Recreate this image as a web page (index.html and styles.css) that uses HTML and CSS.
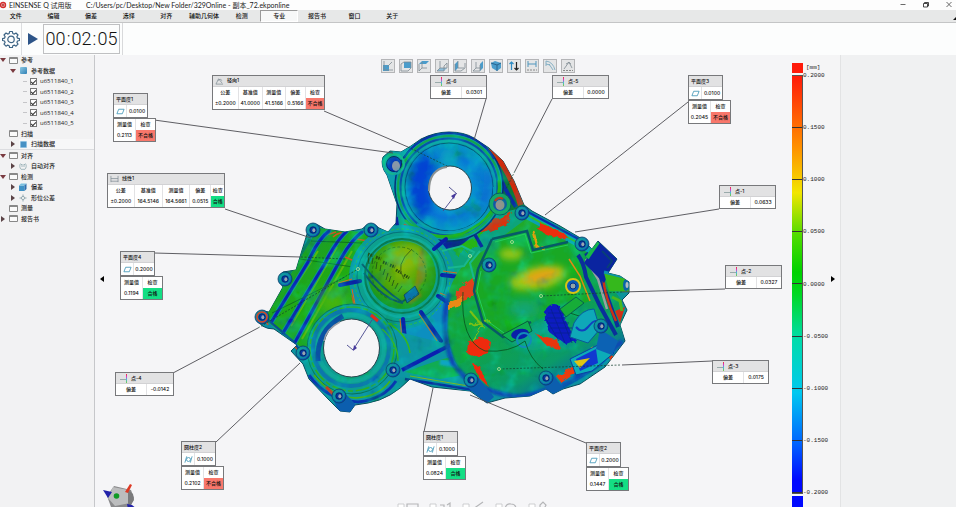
FILE: index.html
```html
<!DOCTYPE html>
<html lang="zh-CN">
<head>
<meta charset="utf-8">
<title>EINSENSE Q 试用版</title>
<link rel="stylesheet" href="styles.css">
</head>
<body>
<div class="app">
<header class="titlebar">
  <svg class="logo" viewBox="0 0 8 8" width="8" height="8" aria-hidden="true"><circle cx="3" cy="4" r="3.2" fill="#d22b2b"/><path d="M1.6 2.6h2.8v2.8H1.6z" fill="#fff"/><circle cx="3" cy="4" r="1" fill="#a01818"/></svg>
  <span class="product">EINSENSE Q 试用版</span>
  <span class="path">C:/Users/pc/Desktop/New Folder/329Online - 副本_72.ekponline</span>
  <div class="window-buttons">
    <button aria-label="最小化"><svg viewBox="0 0 8 8" width="8" height="8"><path d="M1.500 3.500h5" stroke="#444" stroke-width=".8"/></svg></button>
    <button aria-label="还原"><svg viewBox="0 0 8 8" width="8" height="8"><path d="M1.500 2.500h4v3.500h-4zM2.500 2.500v-1h4v3.500h-1" fill="none" stroke="#333" stroke-width=".9"/></svg></button>
    <button aria-label="关闭"><svg viewBox="0 0 8 8" width="8" height="8"><path d="M1.500 1l5 5M6.500 1l-5 5" stroke="#444" stroke-width=".8"/></svg></button>
  </div>
</header>
<nav class="menubar">
  <div class="tabs">
    <button>文件</button><button>编辑</button><button>偏差</button><button>选择</button><button>对齐</button><button>辅助几何体</button><button>检测</button><button class="active">专业</button><button>报告书</button><button>窗口</button><button>关于</button>
  </div>
  <button class="collapse" aria-label="收起"><svg viewBox="0 0 3 3" width="3" height="3"><path d="M0 3L3 0V3z" fill="#111"/></svg></button>
</nav>
<div class="ribbon">
  <button class="tool gear" aria-label="设置"><svg viewBox="0 0 18 18" width="18" height="18" fill="none" stroke="#3c6384" stroke-width="1.200" stroke-linejoin="round"><path d="M7.600 1.500h2.800l.4 2 1.500.6 1.700-1.100 2 2-1.100 1.700.6 1.500 2 .4v1.900l-2 .5-.6 1.500 1.100 1.700-2 2-1.700-1.100-1.500.6-.4 2H7.600l-.4-2-1.500-.6L4 16.200l-2-2 1.100-1.700-.6-1.500-2-.5V8.600l2-.4.6-1.500L2 5l2-2 1.700 1.100 1.500-.6z"/><circle cx="9" cy="9.400" r="3.200"/></svg></button>
  <button class="tool play" aria-label="运行"><svg viewBox="0 0 10 12" width="10" height="12"><path d="M0 0l10 6-10 6z" fill="#2d5488"/></svg></button>
  <time class="clock"><span>00</span><i>:</i><span>02</span><i>:</i><span>05</span></time>
  <div class="ribbon-rest"></div>
</div>
<main class="workspace">
<aside class="sidebar">
<ul class="tree">
  <li class="l1"><b class="tw open"></b><i class="folder"></i>参考</li>
  <li class="l2"><b class="tw open"></b><i class="cube"></i>参考数据</li>
  <li class="l3"><label><input type="checkbox" checked>u6511840_1</label></li>
  <li class="l3"><label><input type="checkbox" checked>u6511840_2</label></li>
  <li class="l3"><label><input type="checkbox" checked>u6511840_3</label></li>
  <li class="l3"><label><input type="checkbox" checked>u6511840_4</label></li>
  <li class="l3"><label><input type="checkbox" checked>u6511840_5</label></li>
  <li class="l1"><b class="tw none"></b><i class="folder"></i>扫描</li>
  <li class="l2 selected"><b class="tw"></b><i class="cube flat"></i>扫描数据</li>
  <li class="l1"><b class="tw open"></b><i class="folder"></i>对齐</li>
  <li class="l2"><b class="tw"></b><svg class="ti" viewBox="0 0 8 8"><path d="M1.500 1.500C.5 3 .5 6 2 7.300h4C7.500 6 7.500 3 6.500 1.500M3 5V2l-1 1M5 5V2l1 1" fill="none" stroke="#8fa9b0" stroke-width=".8"/></svg>自动对齐</li>
  <li class="l1"><b class="tw open"></b><i class="folder"></i>检测</li>
  <li class="l2"><b class="tw"></b><svg class="ti" viewBox="0 0 8 8"><path d="M0 2.500h5.500V8H0z" fill="#3f92c6"/><path d="M0 2.500L2 .5h5.500l-2 2z" fill="#7bc0e0"/><path d="M5.500 2.500l2-2V6l-2 2z" fill="#2f6fae"/></svg>偏差</li>
  <li class="l2"><b class="tw"></b><svg class="ti" viewBox="0 0 8 8"><path d="M4 .5v7M.5 4h7" stroke="#7d97a0" stroke-width=".8"/><circle cx="4" cy="4" r="1.600" fill="#f4f4f4" stroke="#7d97a0" stroke-width=".7"/></svg>形位公差</li>
  <li class="l1"><b class="tw none"></b><i class="folder"></i>测量</li>
  <li class="l1"><b class="tw"></b><i class="folder"></i>报告书</li>
</ul>
</aside>

<section class="stage">
<svg class="scene" width="697" height="453" viewBox="95 54 697 453" aria-hidden="true">
  <defs>
    <filter id="b1" x="-50%" y="-50%" width="200%" height="200%"><feGaussianBlur stdDeviation="1"/></filter>
    <filter id="b3" x="-60%" y="-60%" width="220%" height="220%"><feGaussianBlur stdDeviation="3.500"/></filter>
    <filter id="b6" x="-80%" y="-80%" width="260%" height="260%"><feGaussianBlur stdDeviation="7"/></filter>
    <filter id="rough" x="-30%" y="-30%" width="160%" height="160%"><feTurbulence type="fractalNoise" baseFrequency=".18" numOctaves="2" seed="4" result="n"/><feDisplacementMap in="SourceGraphic" in2="n" scale="6"/><feGaussianBlur stdDeviation=".5"/></filter>
    <filter id="mottle" x="0" y="0" width="100%" height="100%"><feTurbulence type="fractalNoise" baseFrequency=".06" numOctaves="3" seed="11"/><feColorMatrix values="0 0 0 0 0  0 1.600 0 0 -.25  0 0 1.800 0 -.5  3 0 0 0 -1.200"/></filter>
    <linearGradient id="block" x1="0" y1="0" x2="1" y2="1"><stop offset="0" stop-color="#15923c"/><stop offset=".5" stop-color="#22ab10"/><stop offset="1" stop-color="#0b9a5c"/></linearGradient>
    <radialGradient id="disc" cx=".5" cy=".5" r=".5"><stop offset=".4" stop-color="#0a9fd0"/><stop offset=".7" stop-color="#0877d6"/><stop offset="1" stop-color="#0796c4"/></radialGradient>
    <radialGradient id="dome" cx=".5" cy=".4" r=".55"><stop offset="0" stop-color="#86b80a"/><stop offset=".6" stop-color="#4ca408"/><stop offset="1" stop-color="#1a9a20"/></radialGradient>
    <linearGradient id="cover" x1="0" y1="0" x2=".6" y2="1"><stop offset="0" stop-color="#2cab1c"/><stop offset=".5" stop-color="#12a63c"/><stop offset=".85" stop-color="#0b9a68"/><stop offset="1" stop-color="#0763b0"/></linearGradient>
    <linearGradient id="boss" x1="0" y1="0" x2="1" y2="1"><stop offset="0" stop-color="#10a59a"/><stop offset=".6" stop-color="#0b6fb5"/><stop offset="1" stop-color="#0a2fae"/></linearGradient>
    <path id="body" d="M307 233Q309 223 318 224L325 228 345 231 362 228Q371 219 379 227L388 231 396 222 397 203 387 174Q380 165 383 156L390 150 401 151 411 145 421 138 Q435 131 449 131 464 131 474 137L489 147 503 160 514 180 524 204 532 210 560 225 582 238 592 248 598 240 617 258 608 272 620 275 629 281 629 292 622 299 627 309 620 324 625 340 605 366 580 383 563 388 553 393 546 388 530 395 505 397 487 402 470 390 432 386 410 378Q391 398 368 402L355 404 350 411 340 410 328 398 309 378 303 363 291 350 297 344 274 328Q260 328 256 316 257 308 269 311L283 286Q276 277 283 271L296 269Z"/>
    <clipPath id="cb"><use href="#body"/></clipPath>
    <g id="lug"><circle r="7" fill="url(#boss)" stroke="#073c66" stroke-width=".8"/><circle r="5" fill="none" stroke="#12a890" stroke-width=".8"/><circle r="3.200" fill="#0637a0" stroke="#022055" stroke-width=".7"/><ellipse cx=".8" cy=".3" rx="1.500" ry="2" fill="#98a5b0"/></g>
  </defs>

  <use href="#body" fill="#0d93a0" stroke="#0a4a5c" stroke-width="1"/>
  <g clip-path="url(#cb)">
    <!-- ribbed block -->
    <path d="M318 227L395 234 378 262 362 300 330 312 306 350 264 318Z" fill="url(#block)"/>
    <g fill="none">
      <g stroke="#5cb80a" stroke-width="2"><path d="M318 250L278 312M337 246L291 325M352 250L302 338"/></g>
      <g stroke="#d9521a" stroke-width="1.500"><path d="M326 234l10-3M333 236q8-7 12-2M263 312l5 12M345 256l14 6 6 10M356 238l12 2M352 294l2 10M291 342l8 8"/></g>
      <g stroke="#0b9690" stroke-width="5" stroke-linecap="round"><path d="M329 230Q318 238 308 261L272 320M347 230Q336 240 325 262L283 332M362 231Q350 240 338 263L294 343"/></g>
      <g stroke="#0b22b5" stroke-width="3" stroke-linecap="round"><path d="M329 230Q318 238 308 261L272 320M347 230Q336 240 325 262L283 332M362 231Q350 240 338 263L294 343"/></g>
      <path d="M266 317L294 341 300 350" stroke="#0a4c90" stroke-width="2"/>
      <path d="M310 238L264 314" stroke="#0b7f60" stroke-width="3"/>
      <path d="M272 312L345 276M311 240L362 242M300 258L353 266M365 240L381 256" stroke="#0a5a22" stroke-width=".7"/>
      <path d="M375 232l6 14" stroke="#0a1f9a" stroke-width="4"/>
    </g>
    <circle cx="333" cy="300" r="14" fill="#4ab50c" filter="url(#b6)"/>

    <!-- webs between rings -->
    <path d="M398 215L450 240 520 205 535 215 480 260 440 300 410 260Z" fill="#0da47a"/>
    <g filter="url(#rough)"><path d="M403 222l14 8 10 6 12 14-14-3-16-12zM425 242l14 2 6 14-10-4zM470 228l16-6 16-6 10-5-5 12-20 8zM440 248l8 8-4 6z" fill="#dc3108"/><path d="M452 246l20-8 12-10-6 16-22 10z" fill="#28b414"/></g>
    <path d="M437 250q18-16 34-18-8 14-34 18zM396 216l3 20M474 232l8 14" fill="#0a249c" stroke="#0a249c" stroke-width="3.500"/>

    <!-- right flank of the upper ring -->
    <path d="M478 140L500 158 526 206 508 210 498 180Z" fill="#0c7838"/>
    <path d="M488 147Q505 156 513 176L524 203 518 205Q511 178 488 147Z" fill="#ce2a0c"/>
    <path d="M495 160Q500 182 516 206" fill="none" stroke="#0a2da5" stroke-width="4"/>

    <!-- upper ring -->
    <path d="M380 160L396 148 414 142 404 215 397 205Z" fill="#0d9fae"/>
    <circle cx="449" cy="186" r="54" fill="#0a9ca0" stroke="#062c78" stroke-width="1.500"/>
    <circle cx="449" cy="186" r="51" fill="none" stroke="#14a54c" stroke-width="2"/>
    <circle cx="449" cy="186" r="48.500" fill="none" stroke="#0a4fa8" stroke-width="2"/>
    <circle cx="449" cy="186" r="46" fill="none" stroke="#0fa6a6" stroke-width="2"/>
    <circle cx="449" cy="186" r="44" fill="url(#disc)" stroke="#064a72" stroke-width="1"/>
    <path d="M408 186Q409 160 425 150L438 168Q426 180 434 204L420 220Q408 205 408 186Z" fill="#0633d2" opacity=".75" filter="url(#b3)"/>
    <path d="M470 215Q492 200 488 170" fill="none" stroke="#0b5ed8" stroke-width="9" opacity=".6" filter="url(#b3)"/>
    <circle cx="449" cy="157" r="9" fill="#0fb4b8" opacity=".7" filter="url(#b3)"/>
    <path d="M404 157Q418 134 449 132 480 133 494 158" fill="none" stroke="#0833a8" stroke-width="2"/>
    <path d="M499 179Q503 214 462 233 430 242 405 219" fill="none" stroke="#23b21e" stroke-width="3"/>
    <path d="M494 186Q496 207 478 221 450 240 417 223" fill="none" stroke="#0796b8" stroke-width="2"/>
    <circle cx="500" cy="203" r="11" fill="#16a868" stroke="#0a5c60" stroke-width="1"/><circle cx="500" cy="203" r="7" fill="#1258a8"/><ellipse cx="500" cy="204" rx="4.500" ry="5" fill="#99908d"/><path d="M495 200q3-5 8-2" stroke="#c93515" stroke-width="2" fill="none"/>
    <circle cx="394" cy="163" r="10" fill="none" stroke="#16b58e" stroke-width="2"/><circle cx="394" cy="163" r="7.500" fill="#0836b8" stroke="#052060" stroke-width="1"/><ellipse cx="396" cy="165" rx="4" ry="5" fill="#8d97a8"/>

    <!-- dome -->
    <circle cx="402" cy="277" r="53" fill="#0b97a4"/>
    <path d="M440 300Q430 330 396 328L380 350 440 372 475 340 455 290Z" fill="#0c8fc0"/>
    <circle cx="402" cy="276" r="45" fill="#0da08e" stroke="#086070" stroke-width=".8"/>
    <circle cx="402" cy="276" r="48" fill="none" stroke="#2dbd3a" stroke-width="1" stroke-dasharray="3 2"/>
    <circle cx="403" cy="276" r="40" fill="none" stroke="#0eaca0" stroke-width="2.500"/>
    <circle cx="402" cy="275" r="37" fill="none" stroke="#087a50" stroke-width="2"/>
    <circle cx="402" cy="274" r="34" fill="url(#dome)"/>
    <ellipse cx="408" cy="255" rx="19" ry="12" fill="#9cc00a" opacity=".6" filter="url(#b3)"/>
    <path d="M420 247q12 18 3 34l-5 8 4 6-12 9-5-10q8-4 11-14" fill="#e06012" opacity=".35" filter="url(#b1)"/>
    <path d="M362 263Q382 288 402 301L417 290M364 272Q382 298 403 302" fill="none" stroke="#0a5b68" stroke-width="2"/>
    <path d="M368 255l1 8m4-6l-1 6m5-2l-1 7m5-4l-1 6m5-2l-2 6m5-2l-2 7m5-4l-2 6m5-2l-2 6m6-3l-3 6m7-3l-4 6" stroke="#1e4a16" stroke-width=".8"/>
    <path d="M368 253l5 2M376 256l5 2M383 261l5 2M390 264l5 2M396 269l5 3M404 274l5 3" stroke="#244c12" stroke-width="3" stroke-dasharray="1.500 1"/>
    <path d="M412 248Q394 264 404 278" fill="none" stroke="#355514" stroke-width=".8"/>
    <path d="M404 294l11-9 4 8-12 9z" fill="#0b73a8" stroke="#0a3c60" stroke-width=".8"/>
    <circle cx="399" cy="273" r="27" fill="none" stroke="#1a6016" stroke-width=".6" stroke-dasharray="3 2"/>
    <g stroke="#0a1fa8" stroke-width="4" stroke-linecap="round"><path d="M340 284l20-4M403 318l3 31M421 311l20 29M438 295l14 9M442 274l18 2M434 248l12-10"/></g>
    <g fill="none" stroke="#e0661a" stroke-width="1"><path d="M338 282l14-4M400 318l3 32M419 313l18 27M440 292l10 4M443 270l14 2M352 288l4 20M376 318l12 6"/></g>

    <!-- lower left ring -->
    <path d="M306 348Q310 372 330 393 352 406 380 395L400 376 470 391 475 350 395 330Z" fill="#0d95a4"/>
    <circle cx="352" cy="348" r="45" fill="#0d9c90" stroke="#077058" stroke-width="1"/>
    <circle cx="352" cy="348" r="42" fill="none" stroke="#2fae1c" stroke-width="1.500" stroke-dasharray="14 3 5 2"/>
    <circle cx="351" cy="347" r="38" fill="none" stroke="#0c77ac" stroke-width="4"/>
    <circle cx="351" cy="347" r="33" fill="none" stroke="#10a69a" stroke-width="4"/>
    <path d="M318 360Q316 330 343 315" stroke="#0a50a4" stroke-width="5" fill="none"/>
    <path d="M309 374Q326 399 358 401 384 398 396 380" fill="none" stroke="#0836b0" stroke-width="3"/>
    <path d="M314 374Q330 395 356 397 380 395 390 380" fill="none" stroke="#49b414" stroke-width="1.500"/>
    <path d="M326 386l8 8M371 314l7 6" stroke="#e0301a" stroke-width="3"/>
    <path d="M382 328Q398 342 398 360M388 322Q408 334 410 352" fill="none" stroke="#36b81c" stroke-width="1.500"/>
    <path d="M402 369L458 340" stroke="#0a1fb0" stroke-width="4"/>
    <path d="M405 371Q440 358 465 352L475 372 440 378Z" fill="#11ac52"/><path d="M440 361l25 4" stroke="#0ba6c4" stroke-width="6" filter="url(#b1)"/>
    <path d="M405 378L480 390" stroke="#0830a0" stroke-width="2.500"/><path d="M410 375L480 387" stroke="#86b812" stroke-width="1"/>

    <!-- right cover -->
    <path d="M449 290Q458 262 483 250L530 215 582 240 600 270 622 300 624 340 600 366 560 390 520 397 480 390Q452 372 447 330Z" fill="url(#cover)"/>
    <path d="M449 292Q439 330 453 362 470 390 520 396 580 386 622 340" fill="none" stroke="#0848b4" stroke-width="5" filter="url(#b1)"/>
    <path d="M522 212L592 250" stroke="#0aa0b0" stroke-width="7"/><path d="M526 210L586 242" stroke="#0a2cb0" stroke-width="2"/><path d="M527 214L580 243" stroke="#35c01c" stroke-width="1.500"/>
    <path d="M492 240L527 230 533 248 565 240 578 262 590 300 560 310 540 318 504 338 483 322 474 290 478 268Z" fill="#19a824"/>
    <path d="M505 340L545 318 570 300 560 345 530 350Z" fill="#0ba288" filter="url(#b3)"/>
    <ellipse cx="538" cy="277" rx="29" ry="11" transform="rotate(-12 538 277)" fill="#a9c60a" filter="url(#b3)"/>
    <ellipse cx="541" cy="275" rx="18" ry="6" transform="rotate(-14 541 275)" fill="#e4a212" filter="url(#b3)"/>
    <ellipse cx="511" cy="253" rx="12" ry="6" fill="#96c612" filter="url(#b3)"/>
    <ellipse cx="525" cy="308" rx="17" ry="9" fill="#0ca4b0" opacity=".7" filter="url(#b6)"/>
    <rect x="255" y="130" width="375" height="285" filter="url(#mottle)" opacity=".28"/>
    <g filter="url(#rough)">
      <path d="M456 290L474 276 476 294 455 304Z" fill="#e0431a"/><path d="M448 302l16-7-4 10-12 4z" fill="#e88a12"/>
      <path d="M468 342l14-6 8 4-2 12-12 4-9-4z" fill="#ee2a0a"/><path d="M474 364l6 1 4 12 5 9-10-9z" fill="#ee2a0a"/>
      <path d="M540 222l24 10 5 6-20-3-12-7z" fill="#ec2d08"/><path d="M533 230l4 16 8 2" stroke="#e0a010" fill="none" stroke-width="3"/>
      <path d="M536 333l22 6 2 10-14-5z" fill="#e8340c"/><path d="M557 376l18-12 4 6-18 12z" fill="#ec3a0c"/><path d="M572 360l26-16-2 14-18 6z" fill="#e0c010"/><path d="M490 320l-20 4M470 310l12 14-10 16" stroke="#7cc014" stroke-width="2" fill="none"/>
      <path d="M600 344l10 6 2 16" fill="none" stroke="#e53a10" stroke-width="3"/>
    </g>
    <path d="M492 238L527 230 533 249 568 241M478 268L474 290 483 321 503 336 531 321M492 238L478 268" fill="none" stroke="#075a68" stroke-width="2.500"/>
    <path d="M495 241L525 233 531 252 568 244M481 270L477 290 486 319 504 332" fill="none" stroke="#23cd5e" stroke-width="1"/>
    <path d="M502 334L528 320 532 330 512 341Z" fill="#0fae50" stroke="#0a5a40" stroke-width="1"/><ellipse cx="520" cy="333" rx="9" ry="5" fill="#0a1fa8" transform="rotate(-12 520 333)"/><circle cx="524" cy="339" r="7" fill="none" stroke="#128bb8" stroke-width="2"/>
    <path d="M463 291Q460 340 485 350 510 352 525 340 530 358 543 368M564 310l18 6 10 16-30 6" fill="none" stroke="#08521e" stroke-width=".8"/>
    <g filter="url(#rough)"><path d="M546 308q6-8 14-3l8 20 9 15-10 4-17-12q-8-14-4-24z" fill="#0a1cc0"/></g>
    <path d="M548 312h16m-17 5h19m-18 5h21m-19 5h24m-19 5h21M551 308l14 34M557 304l15 38M546 318l13 22" stroke="#06218a" stroke-width=".7"/>
    <path d="M560 308L576 296 584 302 566 316Z" fill="#17ad38" stroke="#086050"/>
    <path d="M574 322Q582 308 594 308L600 328 588 342 570 336Z" fill="#0fa8b8" stroke="#0a5a9a"/><path d="M576 326q6 7 12 0t8-6" fill="none" stroke="#1140c0" stroke-width="2"/>
    <path d="M578 254Q584 262 586 276L600 305 616 334M586 252L606 292 618 326" fill="none" stroke="#0a2f9a" stroke-width="4"/>
    <path d="M569 258L580 275 590 300" fill="none" stroke="#e08a12" stroke-width="1.500"/>
    <path d="M586 258L598 278 607 308" fill="none" stroke="#99a1a4" stroke-width="2.500"/>
    <path d="M603 274Q604 295 616 320" fill="none" stroke="#c83216" stroke-width="2.500"/>
    <path d="M598 240L617 258 604 282 584 262Z" fill="#0a24a0"/><path d="M587 257L598 241" stroke="#16b64a" stroke-width="4"/><path d="M602 250l10 10-5 7" stroke="#083f78" fill="none" stroke-width="2"/>
    <path d="M604 272L625 274 629 291 609 290Z" fill="#35b81c"/><path d="M607 281h14" stroke="#ddb212" stroke-width="4" filter="url(#b3)"/><path d="M604 271l20 5" stroke="#0a90b0" stroke-width="3"/><ellipse cx="626" cy="284" rx="3" ry="6" fill="#0a66a8"/><ellipse cx="627" cy="284" rx="1.500" ry="3" fill="#b4bdbf"/>
    <path d="M615 310l10-4-5 16z" fill="#cf3018"/><path d="M612 296l8 4 2 10" stroke="#4bb61c" stroke-width="3" fill="none"/>
    <path d="M570 358L598 344 614 352 592 370 576 374Z" fill="#0cacb8" stroke="#0a40a0"/><path d="M576 358l20-10 2 14-18 8z" fill="#1138d0"/><path d="M574 360l16-3-10 10z" fill="#dfc415"/><path d="M600 328l18 12-6 14-16-6z" fill="#0c62b4"/>
    <path d="M465 384L478 376 494 396 486 403ZM540 381L552 372 563 387 554 394ZM333 398l12-6 11 12-6 9-11-2Z" fill="#0c5eae"/>
  </g>
  <g fill="#f5f5f7" stroke="#26424c" stroke-width="1"><ellipse cx="450" cy="187" rx="21.500" ry="22"/><ellipse cx="351.500" cy="347" rx="28" ry="29"/></g>
  <path d="M429 190Q429 168 447 166" fill="none" stroke="#8b9192" stroke-width="2"/><path d="M324 340Q326 328 340 321" fill="none" stroke="#9a9faa" stroke-width="1.500"/>
  <use href="#lug" x="313" y="229"/><use href="#lug" x="285" y="278"/><use href="#lug" x="262" y="316"/><use href="#lug" x="303" y="352"/><use href="#lug" x="371" y="229"/><use href="#lug" x="522" y="212"/><use href="#lug" x="489" y="264"/><use href="#lug" x="339" y="395"/><use href="#lug" x="393" y="369"/><use href="#lug" x="471" y="379"/><use href="#lug" x="546" y="377"/><use href="#lug" x="601" y="325"/><use href="#lug" x="582" y="243"/>
  <circle cx="573" cy="285" r="7" fill="#0c5cb8" stroke="#d8c414" stroke-width="2"/><circle cx="573" cy="285" r="3" fill="#92a5a8" stroke="#06308a"/>
  <circle cx="262" cy="316" r="5" fill="none" stroke="#df4020" stroke-width="1.500"/>
  <path d="M480 250L470 262 474 278M442 250l20-5 12 6-10 14-16 2" fill="none" stroke="#18b78f" stroke-width="2"/>

  <g stroke="#4d4d52" stroke-width=".9" fill="none">
    <path d="M147 118L393 152M324 110L408 146M486 98L474 139M552 98L515 170M688 101L545 214M719 208L575 231M725 288L622 291M712 360L622 364M586 442L470 394M424 431L433 387M216 441L300 362M173 372L258 327M154 252L301 256M225 208L311 237"/>
    <path d="M408 146L447 165M515 170L506 188M622 291L541 295M620 364L500 368M258 327L358 268M301 256L345 258" stroke-dasharray="2 1.500" stroke="#124030" opacity=".8"/>
  </g>
  <g stroke="#46468c" stroke-width=".9" fill="none"><path d="M443 210L456 193M449 186l8 7M372 319L353 349M347 344l6 5"/></g><path d="M456 192l-5 3 3 3zM353 350l1-6 3 3z" fill="#46389c"/>
  <g fill="none" stroke="#bde59a" stroke-width=".8"><circle cx="512" cy="241" r="1.500"/><circle cx="541" cy="295" r="1.500"/><circle cx="499" cy="368" r="1.500"/><circle cx="358" cy="268" r="1.500"/><circle cx="470" cy="255" r="1.500"/></g>

  <!-- orientation cube -->
  <path d="M114 485l17 4 3 8-5 12-18-3-4-11z" fill="#8a8a8c"/><path d="M113 486l15 3 2 13-15 3-7-8z" fill="#bcbdbe"/><path d="M128 489l5 4 1 6-5 8-1-5z" fill="#7a7a7c"/><circle cx="116.500" cy="495" r="2.800" fill="#119a26"/>
  <path d="M103 489l9 2-4 6z" fill="#2222aa"/><path d="M127 503l5 1 5 4h-9z" fill="#2222aa"/><path d="M125 491l5-8 2 1-4 8z" fill="#dd3a25"/>

  <g fill="#fff" stroke="#c3c4c6" stroke-width=".8"><path d="M398 503h6v5h-6zM430 503h6v5h-6zM463 503h6v5h-6zM496 503h6v5h-6zM529 503h6v5h-6z"/></g>
  <g fill="none" stroke="#b5b6b8" stroke-width="1.200"><path d="M407 508v-5h11v5M440 504h4v4M447 504l3-2v6M473 508l10-7M505 508q1-6 6-5 5 0 5 5M540 508v-4l3-3 3 3-2 4"/></g>
</svg>

<div class="viewtools">
  <button aria-label="轴测"><svg viewBox="0 0 12 12"><path d="M1 5h6v6H1z" fill="#4a9ccb"/><path d="M2 1v9h9M5 7l5-5" class="ln"/></svg></button>
  <button aria-label="前视"><svg viewBox="0 0 12 12"><path d="M4 2h7v6H4z" fill="#4a9ccb"/><path d="M1 4v7h7l3-3V2H4L1 4z" class="ln"/></svg></button>
  <button aria-label="上视"><svg viewBox="0 0 12 12"><path d="M1 4l3-3h7L8 4z" fill="#4a9ccb"/><path d="M1 4v7l3-3V2M4 8h5" class="ln"/></svg></button>
  <button aria-label="下视"><svg viewBox="0 0 12 12"><path d="M1 11l3-3h7l-3 3z" fill="#8dbfdc"/><path d="M4 1v7h7V3L8 6v5H1l3-3" class="ln"/></svg></button>
  <button aria-label="左视"><svg viewBox="0 0 12 12"><path d="M1 4l3-3v7l-3 3z" fill="#4a9ccb"/><path d="M1 4v7h6l4-3V3M4 8h6M4 1v7" class="ln"/></svg></button>
  <button aria-label="右视"><svg viewBox="0 0 12 12"><path d="M8 4l3-3v7l-3 3z" fill="#4a9ccb"/><path d="M4 2v6l-3 3h7V5M4 8h5" class="ln"/></svg></button>
  <button aria-label="适合"><svg viewBox="0 0 12 12"><path d="M1 3l4-2 6 2v5l-4 3-5-3z" fill="#4a9ccb"/><path d="M1 3l6 2 4-2M7 5v6" stroke="#28658f" fill="none"/></svg></button>
  <button aria-label="翻转"><svg viewBox="0 0 12 12"><path d="M3.500 10V2M1.500 4l2-2 2 2" fill="none" stroke="#2f8cc4" stroke-width="1.200"/><path d="M8.500 2v8M6.500 8l2 2 2-2" fill="none" stroke="#222" stroke-width="1.200"/></svg></button>
  <button aria-label="距离"><svg viewBox="0 0 12 12"><path d="M2 1v6M10 1v6M2 4h8" stroke="#5196bd" fill="none"/><path d="M1 10h10" stroke="#888" stroke-dasharray="2 1"/></svg></button>
  <button aria-label="圆弧"><svg viewBox="0 0 12 12"><path d="M2 1q7 1 9 9M2 4l4 1M2 1v5M5 4l4 6" fill="none" stroke="#6fa3bd" stroke-width=".8"/></svg></button>
  <button aria-label="角度"><svg viewBox="0 0 12 12"><path d="M2 9L7 2l3 6M4 4q3-3 5 0" class="ln"/><path d="M1 10.500h10" stroke="#888" stroke-dasharray="2 1"/></svg></button>
</div>

<div class="node wide n-radial"><table><thead><tr><th colspan="5"><svg viewBox="0 0 10 9"><path d="M1 8L4 2l4 5M1 8h8M3 4q3-3 5 0" class="ln"/></svg>径向1</th></tr></thead><tbody><tr><td>公差</td><td>基准值</td><td>测量值</td><td>偏差</td><td>检查</td></tr><tr><td>±0.2000</td><td>41.0000</td><td>41.5166</td><td>0.5166</td><td class="ng">不合格</td></tr></tbody></table></div>
<div class="node wide n-linear"><table><thead><tr><th colspan="5"><svg viewBox="0 0 10 9"><path d="M1 1v7M9 1v7M1 4h8M1 7h8" class="ln"/></svg>线性1</th></tr></thead><tbody><tr><td>公差</td><td>基准值</td><td>测量值</td><td>偏差</td><td>检查</td></tr><tr><td>±0.2000</td><td>164.5146</td><td>164.5661</td><td>0.0515</td><td class="ok">合格</td></tr></tbody></table></div>

<div class="node point n-p6"><table><thead><tr><th colspan="2"><i class="axis"></i>点-6</th></tr></thead><tbody><tr><td>偏差</td><td>0.0301</td></tr></tbody></table></div>
<div class="node point n-p5"><table><thead><tr><th colspan="2"><i class="axis"></i>点-5</th></tr></thead><tbody><tr><td>偏差</td><td>0.0000</td></tr></tbody></table></div>
<div class="node point n-p1"><table><thead><tr><th colspan="2"><i class="axis"></i>点-1</th></tr></thead><tbody><tr><td>偏差</td><td>0.0633</td></tr></tbody></table></div>
<div class="node point n-p2"><table><thead><tr><th colspan="2"><i class="axis"></i>点-2</th></tr></thead><tbody><tr><td>偏差</td><td>0.0327</td></tr></tbody></table></div>
<div class="node point n-p3"><table><thead><tr><th colspan="2"><i class="axis"></i>点-3</th></tr></thead><tbody><tr><td>偏差</td><td>0.0175</td></tr></tbody></table></div>
<div class="node point n-p4"><table><thead><tr><th colspan="2"><i class="axis"></i>点-4</th></tr></thead><tbody><tr><td>偏差</td><td>-0.0142</td></tr></tbody></table></div>

<div class="node form n-f1"><table class="spec"><thead><tr><th colspan="2">平面度1</th></tr></thead><tbody><tr><td><svg viewBox="0 0 10 7"><path d="M3 1h6L7 6H1z" class="sym"/></svg></td><td>0.0100</td></tr></tbody></table><table class="result"><tbody><tr><td>测量值</td><td>检查</td></tr><tr><td>0.2113</td><td class="ng">不合格</td></tr></tbody></table></div>
<div class="node form n-f3"><table class="spec"><thead><tr><th colspan="2">平面度3</th></tr></thead><tbody><tr><td><svg viewBox="0 0 10 7"><path d="M3 1h6L7 6H1z" class="sym"/></svg></td><td>0.0100</td></tr></tbody></table><table class="result"><tbody><tr><td>测量值</td><td>检查</td></tr><tr><td>0.2045</td><td class="ng">不合格</td></tr></tbody></table></div>
<div class="node form n-f4"><table class="spec"><thead><tr><th colspan="2">平面度4</th></tr></thead><tbody><tr><td><svg viewBox="0 0 10 7"><path d="M3 1h6L7 6H1z" class="sym"/></svg></td><td>0.2000</td></tr></tbody></table><table class="result"><tbody><tr><td>测量值</td><td>检查</td></tr><tr><td>0.1194</td><td class="ok">合格</td></tr></tbody></table></div>
<div class="node form n-f2"><table class="spec"><thead><tr><th colspan="2">平面度2</th></tr></thead><tbody><tr><td><svg viewBox="0 0 10 7"><path d="M3 1h6L7 6H1z" class="sym"/></svg></td><td>0.2000</td></tr></tbody></table><table class="result"><tbody><tr><td>测量值</td><td>检查</td></tr><tr><td>0.1447</td><td class="ok">合格</td></tr></tbody></table></div>
<div class="node form n-c1"><table class="spec"><thead><tr><th colspan="2">圆柱度1</th></tr></thead><tbody><tr><td><svg viewBox="0 0 10 7"><path d="M3 0L1 7M9 0L7 7" class="sym"/><circle cx="5" cy="3.500" r="2.200" class="sym"/></svg></td><td>0.1000</td></tr></tbody></table><table class="result"><tbody><tr><td>测量值</td><td>检查</td></tr><tr><td>0.0824</td><td class="ok">合格</td></tr></tbody></table></div>
<div class="node form n-c2"><table class="spec"><thead><tr><th colspan="2">圆柱度2</th></tr></thead><tbody><tr><td><svg viewBox="0 0 10 7"><path d="M3 0L1 7M9 0L7 7" class="sym"/><circle cx="5" cy="3.500" r="2.200" class="sym"/></svg></td><td>0.1000</td></tr></tbody></table><table class="result"><tbody><tr><td>测量值</td><td>检查</td></tr><tr><td>0.2102</td><td class="ng">不合格</td></tr></tbody></table></div>

<button class="flip prev" aria-label="上一个"></button>
</section>

<section class="legend">
  <div class="over"></div><span class="unit">[mm]</span>
  <div class="ramp"></div>
  <ol class="ticks"><li>0.2000</li><li>0.1500</li><li>0.1000</li><li>0.0500</li><li>0.0000</li><li>-0.0500</li><li>-0.1000</li><li>-0.1500</li><li>-0.2000</li></ol>
  <div class="under"></div>
  <button class="flip next" aria-label="下一个"></button>
</section>
<aside class="inspector"></aside>
</main>
</div>
</body>
</html>
```
FILE: styles.css
```css
* { box-sizing: border-box; }
body { margin: 0; background: #f4f4f6; color: #222; font: 6px/10px "Open Sans", "Noto Sans CJK SC", sans-serif; overflow: hidden; }
button { border: 0; padding: 0; margin: 0; background: none; font: inherit; color: inherit; }
ul, ol { list-style: none; margin: 0; padding: 0; }
svg { display: block; }
.ln { fill: none; stroke: #7d8a92; stroke-width: 0.8; }
.sym { fill: none; stroke: #3d93b5; stroke-width: 0.9; }

.app { display: flex; flex-direction: column; height: 100vh; }

.titlebar { display: flex; align-items: center; height: 10px; background: #fdfdfd; font: 7px/9px "Lato", "Noto Sans CJK SC", sans-serif; white-space: nowrap; color: #222; padding-right: 3px; }
.logo { margin-right: 1px; }
.product { width: 77px; }
.path { flex: 1; }
.window-buttons { display: flex; gap: 15px; }

.menubar { display: flex; justify-content: space-between; align-items: stretch; height: 13px; background: #e7e8e8; border-bottom: 1px solid #c4c5c6; overflow: hidden; }
.tabs { display: grid; grid-template-columns: repeat(11, 1fr); width: 414px; margin-left: -3px; }
.tabs button { white-space: nowrap; font-weight: 500; color: #111; border: 1px solid transparent; display: flex; justify-content: center; align-items: center; }
.tabs .active { background: #f7f8f8; border-color: #999 #fff #fff #999; }
.collapse { align-self: center; padding-top: 4px; }

.ribbon { display: flex; align-items: center; height: 32px; background: #fcfdfd; }
.tool { display: flex; align-items: center; justify-content: center; height: 32px; }
.gear { width: 22px; padding-left: 1px; border-right: 1px solid #dcdde0; }
.play { width: 21px; }
.clock { display: flex; justify-content: center; align-items: center; width: 77px; height: 30px; border: 1px solid #bfc0c2; color: #111; font: 300 18px/28px "Roboto", sans-serif; }
.clock i { font-style: normal; width: 6px; text-align: center; }
.ribbon-rest { align-self: stretch; flex: 1; margin-left: 2px; border-left: 1px solid #d8d9db; }

.workspace { display: flex; flex: 1; min-height: 0; }
.sidebar { width: 95px; border-right: 1px solid #c6c7ca; background: #f2f2f3; flex: none; }
.tree { display: grid; grid-template-rows: repeat(16, 1fr); height: 169px; font-weight: 500; color: #1c1c1c; }
.tree li { display: flex; align-items: center; gap: 3px; white-space: nowrap; }
.l1 { padding-left: 0; }
.l2 { padding-left: 10px; }
.l3 { padding-left: 23px; }
.l3::before { content: ""; width: 4px; border-top: 1px solid #c5c5c8; }
.l3 label { display: flex; align-items: center; gap: 3px; }
.tree input { appearance: none; width: 7px; height: 7px; margin: 0; border: 1px solid #777; background: #fff; display: grid; place-items: center; }
.tree input:checked::before { content: ""; width: 4px; height: 2px; border-left: 1px solid #333; border-bottom: 1px solid #333; transform: rotate(-45deg); }
.tw { width: 6px; display: flex; justify-content: center; }
.tw::before { content: ""; border: 3px solid transparent; border-left: 4px solid #5b4346; border-right: 0; }
.tw.open::before { border: 3px solid transparent; border-top: 4px solid #7a3b40; border-bottom: 0; }
.tw.none::before { visibility: hidden; }
.folder { width: 9px; height: 7px; border: 1px solid #888; border-top-width: 2px; border-radius: 1px; background: #fafafa; }
.cube { width: 7px; height: 7px; margin: 0 1px; background: linear-gradient(135deg, #8cc9e4, #2f7fb4); border-radius: 1px; }
.cube.flat { background: #4791c4; border: 1px solid #8fc0e0; }
.ti { width: 8px; height: 8px; margin-right: 1px; }
.selected { background: linear-gradient(90deg, transparent 19px, #f7f7f8 19px); border-bottom: 1px solid #dcdde0; }

.stage { position: relative; flex: 1; min-width: 0; background: #f5f5f7; overflow: hidden; }
.scene { position: absolute; left: 0; top: 0; }
.viewtools { position: absolute; left: 286px; top: 4px; display: flex; gap: 4px; }
.viewtools button { width: 14px; height: 14px; border: 1px solid #b4b5b7; background: #e4e5e6; display: grid; place-items: center; }
.viewtools svg { width: 12px; height: 12px; }

.node { position: absolute; font: 500 5px/7px "Inter", "Noto Sans CJK SC", sans-serif; color: #111; }
.node table { border-collapse: separate; border-spacing: 0; background: #fff; border: 1px solid #77787b; width: 100%; }
.node td, .node th { padding: 0; height: 11px; text-align: center; white-space: nowrap; font-weight: 500; }
.node td + td { border-left: 1px solid #e2e2e4; }
.node th { background: #e2e2e3; text-align: left; padding-left: 2px; border-bottom: 1px solid #d2d2d4; }
.node th svg { display: inline-block; vertical-align: middle; width: 9px; height: 8px; margin-right: 3px; }
.node .ng { background: #f8776b; }
.node .ok { background: #14de84; }
.point { width: 57px; }
.point td:first-child { width: 30px; }
.axis { display: inline-block; vertical-align: middle; width: 10px; height: 9px; margin-right: 3px; background: linear-gradient(#e33, #d3c 30%, #4bd 60%, #7c4) 8px 0 / 1px 9px no-repeat, linear-gradient(#9aa, #9aa) 2px 5px / 6px 1px no-repeat; }
.form { width: 43px; }
.form .spec { width: 35px; }
.form .spec td { height: 12px; }
.form .spec td:first-child { width: 12px; }
.form td svg { width: 9px; height: 7px; margin: 0 auto; }
.form .result td:first-child { width: 21px; }

.n-radial { left: 117px; top: 20px; width: 113px; }
.n-linear { left: 12px; top: 118px; width: 118px; }
.n-p6 { left: 335px; top: 20px; }
.n-p5 { left: 457px; top: 20px; }
.n-p1 { left: 624px; top: 130px; }
.n-p2 { left: 630px; top: 210px; }
.n-p3 { left: 617px; top: 305px; }
.n-p4 { left: 20px; top: 317px; width: 59px; }
.n-f1 { left: 18px; top: 38px; }
.n-f3 { left: 593px; top: 20px; }
.n-f4 { left: 25px; top: 196px; }
.n-f2 { left: 491px; top: 387px; }
.n-c1 { left: 328px; top: 376px; }
.n-c2 { left: 86px; top: 386px; }

.flip { position: absolute; top: 221px; border: 3px solid transparent; width: 0; height: 0; }
.prev { left: 5px; border-left: 0; border-right: 4px solid #000; }
.next { right: 5px; border-right: 0; border-left: 4px solid #000; }

.legend { position: relative; width: 49px; flex: none; display: grid; grid-template: 10px 1fr 11px / 11px 1fr; row-gap: 2px; padding-top: 8px; background: #f5f5f6; border-right: 1px solid #e2e3e4; }
.over { background: #ff1a0a; }
.unit { font: 6px/10px "Liberation Mono", monospace; padding-left: 3px; }
.ramp { border: 1px solid #555; border-width: 1px 1px 1px 0; background: repeating-linear-gradient(transparent 0, transparent calc(12.5% - 1px), #333 calc(12.5% - 1px), #333 12.5%), linear-gradient(#ff1a0a, #ff9000 17%, #f2e600 28%, #52dc00 38%, #00d200 47%, #00d820 52%, #00dcaa 63%, #00c8f0 76%, #0064ff 88%, #0008ff 97%); }
.ticks { display: flex; flex-direction: column; justify-content: space-between; margin: -4px 0; font: 6px/10px "Liberation Mono", monospace; }
.under { background: #0008ff; }
.inspector { width: 115px; flex: none; background: #f0f1f2; }
```
